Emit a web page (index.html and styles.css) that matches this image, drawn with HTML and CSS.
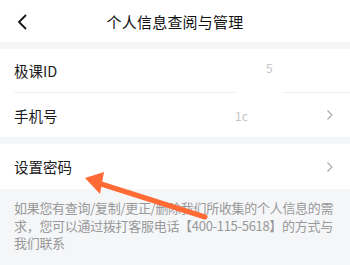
FILE: index.html
```html
<!DOCTYPE html>
<html lang="zh">
<head>
<meta charset="utf-8">
<link rel="stylesheet" href="styles.css">
</head>
<body>
<div class="page">
  <header class="nav">
    <svg class="back" width="12" height="18" viewBox="0 0 12 18"><path d="M10 2 L3 9 L10 16" fill="none" stroke="#111" stroke-width="1.8"/></svg>
    <div class="title">个人信息查阅与管理</div>
  </header>
  <div class="gap"></div>
  <section class="group">
    <div class="row first">
      <span class="label">极课ID</span>
      <span class="value v1">5</span>
    </div>
    <div class="row">
      <span class="label">手机号</span>
      <span class="value v2">1c</span>
      <svg class="chev" width="8" height="12" viewBox="0 0 8 12"><path d="M1.5 1.5 L6 6 L1.5 10.5" fill="none" stroke="#a8a8a8" stroke-width="1.1"/></svg>
    </div>
  </section>
  <div class="gap2"></div>
  <section class="group">
    <div class="row">
      <span class="label">设置密码</span>
      <svg class="chev" width="8" height="12" viewBox="0 0 8 12"><path d="M1.5 1.5 L6 6 L1.5 10.5" fill="none" stroke="#a8a8a8" stroke-width="1.1"/></svg>
    </div>
  </section>
  <p class="note">如果您有查询/复制/更正/删除我们所收集的个人信息的需求，您可以通过拨打客服电话【400-115-5618】的方式与我们联系</p>
  <div class="mask"></div>
  <svg class="arrow" width="350" height="265" viewBox="0 0 350 265">
    <line x1="205" y1="217" x2="98" y2="183" stroke="#ff6a35" stroke-width="5" stroke-linecap="round"/>
    <polygon points="85,178 104,172 100,194" fill="#ff6a35"/>
  </svg>
</div>
</body>
</html>
```
FILE: styles.css
```css
* { box-sizing: border-box; }
html, body { margin: 0; padding: 0; }
body {
  width: 350px;
  height: 265px;
  overflow: hidden;
  background: #f5f6f8;
  font-family: "Noto Sans CJK SC", "Noto Sans", sans-serif;
}
.page { position: relative; width: 350px; height: 265px; }
.nav {
  height: 42px;
  background: #fff;
  display: flex;
  align-items: center;
  justify-content: center;
  position: relative;
}
.back { position: absolute; left: 16px; top: 13px; }
.title { font-size: 15px; color: #111; letter-spacing: 0.2px; }
.gap { height: 7px; }
.gap2 { height: 7px; }
.group { background: #fff; padding-left: 14px; }
.row {
  height: 44px;
  display: flex;
  align-items: center;
  padding-right: 16px;
  position: relative;
}
.row.first { border-bottom: 1px solid #f0f0f0; }
.label { font-size: 14.5px; color: #1a1a1a; flex: 1; }
.value { font-size: 12px; color: #c4c4c4; position: absolute; }
.v1 { left: 252px; top: 10px; }
.v2 { left: 221px; top: 14px; }
.chev { display: block; }
.group:last-of-type .row { height: 45px; }
.note {
  margin: 0;
  padding: 10px 14px 0 14px;
  font-size: 13px;
  line-height: 17.5px;
  color: #999;
  letter-spacing: -0.3px;
}
.mask {
  position: absolute;
  left: 236px;
  top: 92px;
  width: 46px;
  height: 2px;
  background: #fff;
}
.arrow { position: absolute; left: 0; top: 0; pointer-events: none; }
```
